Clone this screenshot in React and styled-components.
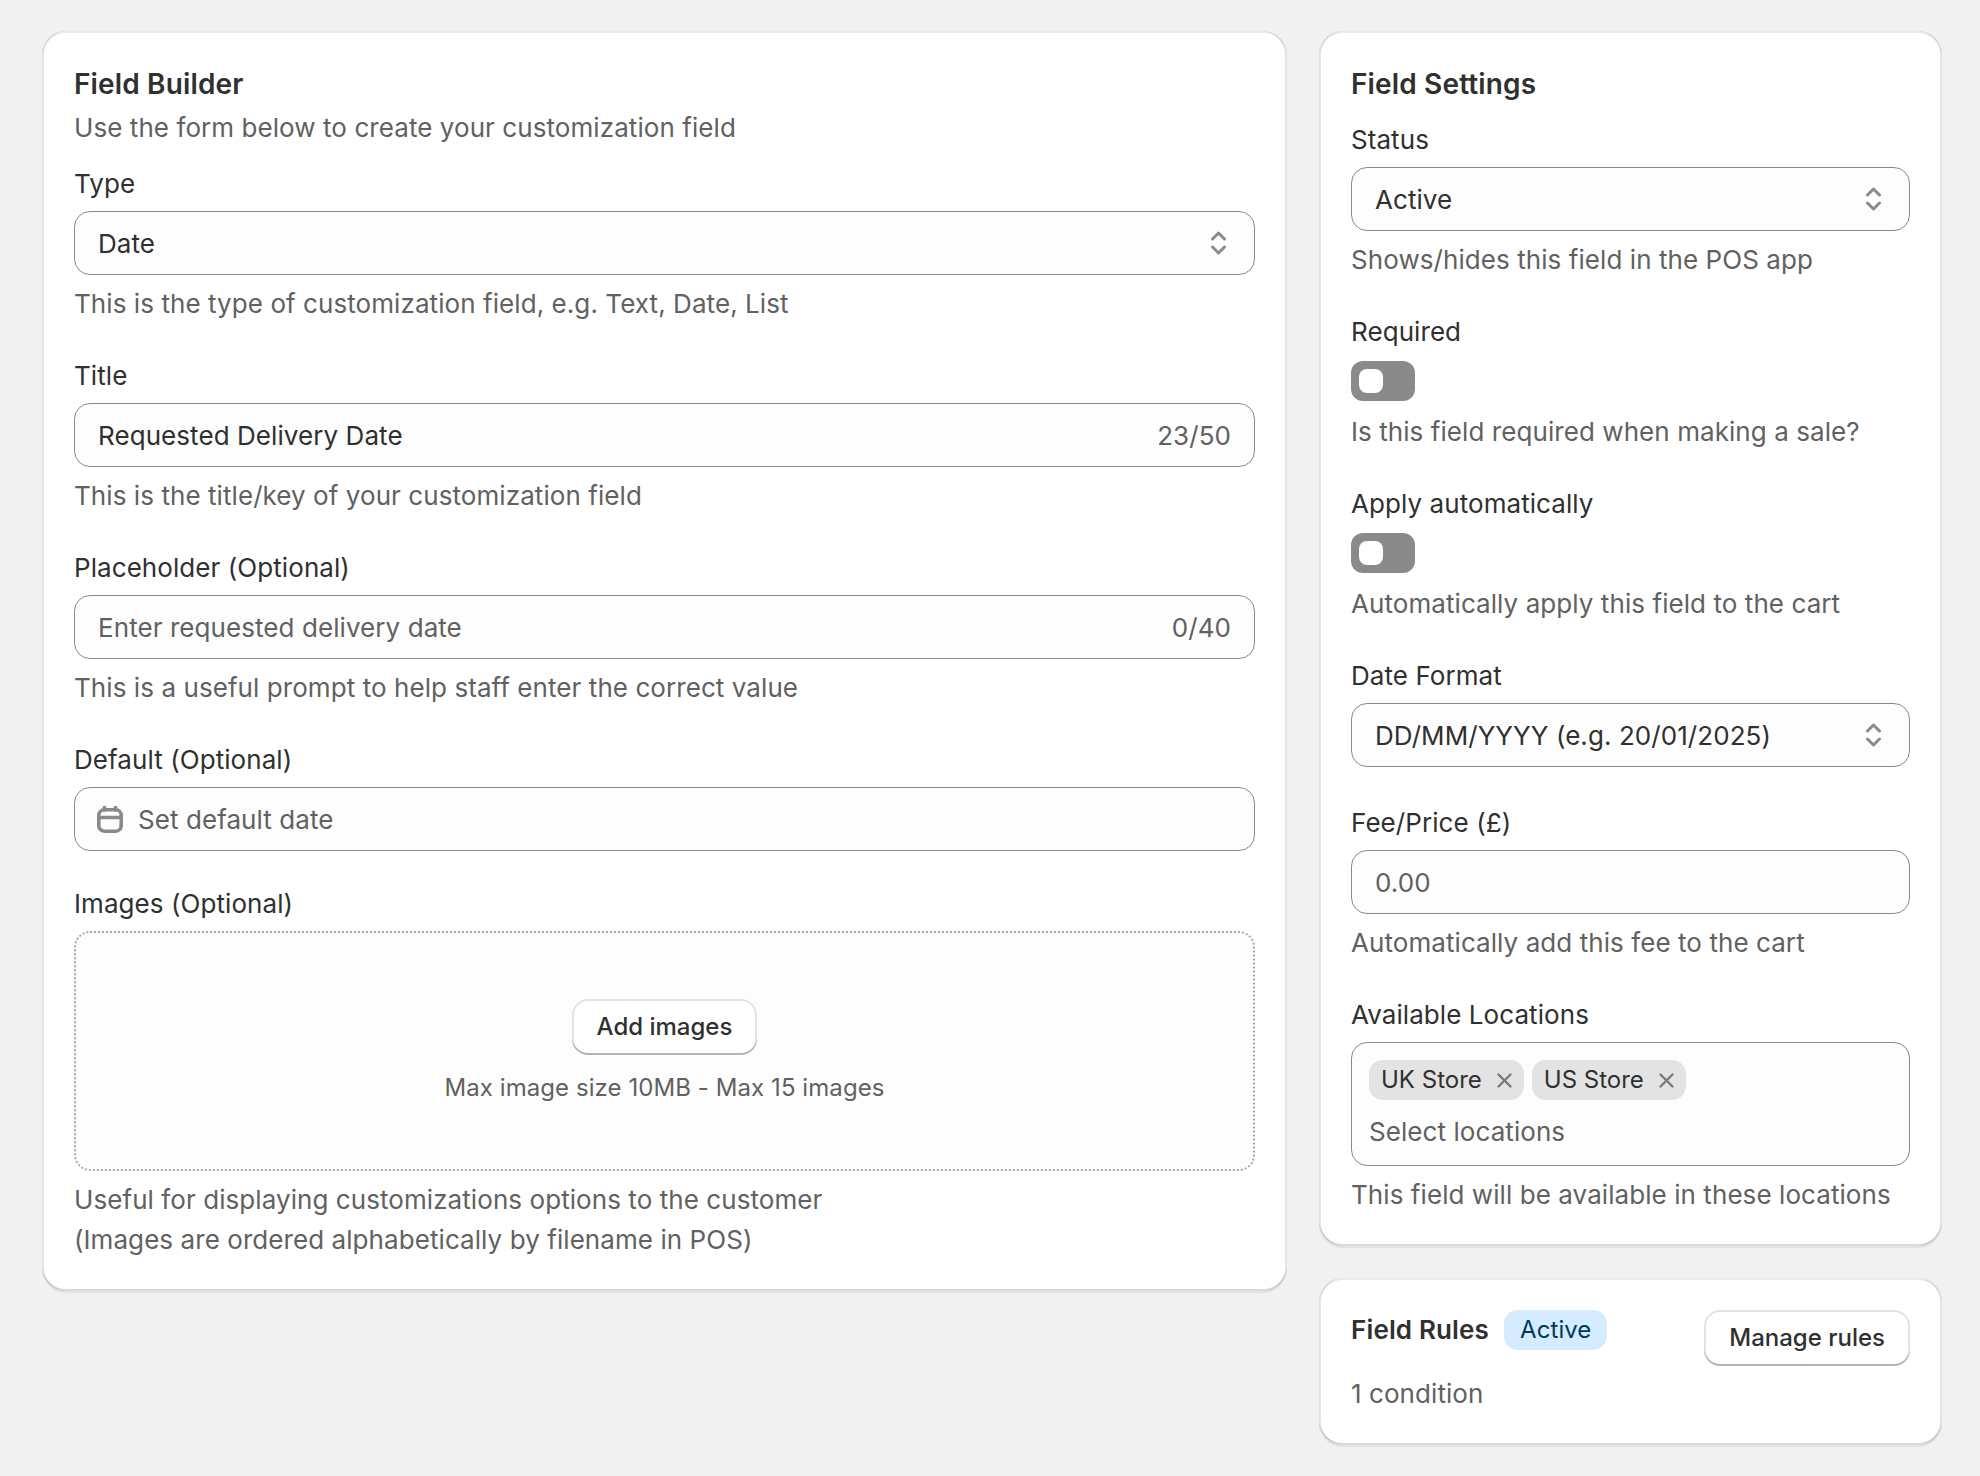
import React from 'react';
import styled, { createGlobalStyle } from 'styled-components';

const GlobalStyle = createGlobalStyle`
  html, body {
    margin: 0;
    padding: 0;
    background: #f1f1f1;
  }
  body {
    font-family: "Inter", "Liberation Sans", sans-serif;
    font-size: 26px;
    line-height: 40px;
    font-weight: 400;
    letter-spacing: 0.07px;
    color: #303030;
    -webkit-font-smoothing: antialiased;
  }
`;

const SelectArrows = () => (
  <ArrowSvg viewBox="0 0 15 24">
    <polyline points="1.5,8 7.5,2 13.5,8" />
    <polyline points="1.5,16 7.5,22 13.5,16" />
  </ArrowSvg>
);

const CalendarIcon = () => (
  <CalendarSvg viewBox="0 0 26 27">
    <rect x="1.8" y="3.8" width="22.4" height="21.4" rx="5.5" />
    <line x1="2" y1="11.5" x2="24" y2="11.5" />
    <line x1="7.5" y1="1.5" x2="7.5" y2="4" />
    <line x1="18.5" y1="1.5" x2="18.5" y2="4" />
  </CalendarSvg>
);

const SelectField = ({ value }) => (
  <FieldBox>
    <FieldValue>{value}</FieldValue>
    <SelectArrows />
  </FieldBox>
);

const Toggle = () => (
  <ToggleTrack>
    <ToggleKnob />
  </ToggleTrack>
);

const LocationTag = ({ name }) => (
  <Tag>
    {name}
    <TagClose viewBox="0 0 15 15">
      <line x1="1.5" y1="1.5" x2="13.5" y2="13.5" />
      <line x1="13.5" y1="1.5" x2="1.5" y2="13.5" />
    </TagClose>
  </Tag>
);

export default function App() {
  return (
    <>
      <GlobalStyle />
      <Page>
        <BuilderColumn>
          <Card>
            <Heading>Field Builder</Heading>
            <Intro>Use the form below to create your customization field</Intro>

            <Group>
              <Label>Type</Label>
              <SelectField value="Date" />
              <Help>This is the type of customization field, e.g. Text, Date, List</Help>
            </Group>

            <Group>
              <Label>Title</Label>
              <FieldBox>
                <FieldValue>Requested Delivery Date</FieldValue>
                <Counter>23/50</Counter>
              </FieldBox>
              <Help>This is the title/key of your customization field</Help>
            </Group>

            <Group>
              <Label>Placeholder (Optional)</Label>
              <FieldBox>
                <FieldValue $muted>Enter requested delivery date</FieldValue>
                <Counter>0/40</Counter>
              </FieldBox>
              <Help>This is a useful prompt to help staff enter the correct value</Help>
            </Group>

            <Group>
              <Label>Default (Optional)</Label>
              <FieldBox $iconLeft>
                <CalendarIcon />
                <FieldValue $muted>Set default date</FieldValue>
              </FieldBox>
            </Group>

            <Group>
              <Label>Images (Optional)</Label>
              <DropZone>
                <Button>Add images</Button>
                <DropHint>Max image size 10MB - Max 15 images</DropHint>
              </DropZone>
              <Help>
                Useful for displaying customizations options to the customer
                <br />
                (Images are ordered alphabetically by filename in POS)
              </Help>
            </Group>
          </Card>
        </BuilderColumn>

        <SideColumn>
          <Card>
            <Heading>Field Settings</Heading>
            <Group>
              <Label>Status</Label>
              <SelectField value="Active" />
              <Help>Shows/hides this field in the POS app</Help>
            </Group>

            <Group>
              <Label>Required</Label>
              <Toggle />
              <Help>Is this field required when making a sale?</Help>
            </Group>

            <Group>
              <Label>Apply automatically</Label>
              <Toggle />
              <Help>Automatically apply this field to the cart</Help>
            </Group>

            <Group>
              <Label>Date Format</Label>
              <SelectField value="DD/MM/YYYY (e.g. 20/01/2025)" />
            </Group>

            <Group $wide>
              <Label>Fee/Price (£)</Label>
              <FieldBox>
                <FieldValue $muted>0.00</FieldValue>
              </FieldBox>
              <Help>Automatically add this fee to the cart</Help>
            </Group>

            <Group>
              <Label>Available Locations</Label>
              <TagBox>
                <TagRow>
                  <LocationTag name="UK Store" />
                  <LocationTag name="US Store" />
                </TagRow>
                <TagPlaceholder>Select locations</TagPlaceholder>
              </TagBox>
              <Help>This field will be available in these locations</Help>
            </Group>
          </Card>

          <Card $compact>
            <RulesHeader>
              <RulesTitle>
                <RulesHeading>Field Rules</RulesHeading>
                <Badge>Active</Badge>
              </RulesTitle>
              <Button>Manage rules</Button>
            </RulesHeader>
            <Help>1 condition</Help>
          </Card>
        </SideColumn>
      </Page>
    </>
  );
}

const Page = styled.div`
  display: flex;
  align-items: flex-start;
  gap: 32px;
  padding: 31px 38px 31px 42px;
  box-sizing: border-box;
  min-height: 100vh;
`;

const BuilderColumn = styled.div`
  flex: 0 0 1245px;
  min-width: 0;
`;

const SideColumn = styled.div`
  flex: 0 0 623px;
  display: flex;
  flex-direction: column;
  gap: 32px;
`;

const Card = styled.section`
  background: #fff;
  border-radius: 24px;
  padding: ${(p) => (p.$compact ? '32px' : '33px')} 32px 31px;
  box-sizing: border-box;
  box-shadow:
    0 2px 0 0 rgba(26, 26, 26, 0.07),
    inset 2px 0 0 0 rgba(0, 0, 0, 0.1),
    inset -2px 0 0 0 rgba(0, 0, 0, 0.1),
    inset 0 -2px 0 0 rgba(0, 0, 0, 0.14),
    inset 0 2px 0 0 rgba(204, 204, 204, 0.4);
`;

const Heading = styled.h2`
  margin: 0;
  font-size: 28px;
  line-height: 40px;
  font-weight: 600;
  letter-spacing: 0.15px;
  color: #303030;
`;

const RulesHeading = styled(Heading)`
  font-size: 26px;
`;

const Intro = styled.p`
  margin: 4px 0 0;
  color: #616161;
`;

const Group = styled.div`
  display: flex;
  flex-direction: column;
  margin-top: ${(p) => (p.$wide ? '35px' : '32px')};

  ${Intro} + &, ${Heading} + & {
    margin-top: 16px;
  }
`;

const Label = styled.div`
  margin-bottom: 7px;
  color: #303030;
`;

const Help = styled.div`
  margin-top: 8px;
  color: #616161;
`;

const FieldBox = styled.div`
  display: flex;
  align-items: center;
  gap: ${(p) => (p.$iconLeft ? '15px' : '24px')};
  height: 64px;
  flex: none;
  margin-bottom: 1px;
  padding: 2px 23px 0 ${(p) => (p.$iconLeft ? '22px' : '23px')};
  box-sizing: border-box;
  background: #fdfdfd;
  border: 1.3px solid #8a8a8a;
  border-radius: 16px;
`;

const FieldValue = styled.span`
  flex: 1;
  color: ${(p) => (p.$muted ? '#616161' : '#303030')};
`;

const Counter = styled.span`
  color: #616161;
`;

const ArrowSvg = styled.svg`
  flex: none;
  width: 15px;
  height: 24px;
  margin: -2px 5px 0 0;
  fill: none;
  stroke: #8a8a8a;
  stroke-width: 3;
  stroke-linecap: round;
  stroke-linejoin: round;
`;

const CalendarSvg = styled.svg`
  flex: none;
  width: 26px;
  height: 27px;
  margin-top: -2px;
  fill: none;
  stroke: #8a8a8a;
  stroke-width: 3.6;
  stroke-linecap: round;
`;

const ToggleTrack = styled.div`
  display: flex;
  align-items: center;
  flex: none;
  width: 64px;
  height: 40px;
  margin: 2px 0 3px;
  padding-left: 8px;
  box-sizing: border-box;
  background: #8a8a8a;
  border-radius: 12px;
`;

const ToggleKnob = styled.div`
  width: 24px;
  height: 24px;
  background: #fff;
  border-radius: 8px;
`;

const DropZone = styled.div`
  display: flex;
  flex-direction: column;
  align-items: center;
  justify-content: center;
  flex: none;
  gap: 13px;
  height: 240px;
  margin-bottom: 1px;
  padding-top: 4px;
  box-sizing: border-box;
  background: #fdfdfd;
  border: 2px dotted #a8a8a8;
  border-radius: 16px;
`;

const DropHint = styled.div`
  font-size: 24px;
  color: #616161;
`;

const Button = styled.button`
  height: 56px;
  padding: 0 25px;
  box-sizing: border-box;
  flex: none;
  font: inherit;
  font-size: 24px;
  font-weight: 500;
  color: #303030;
  background: #fff;
  border: none;
  border-radius: 16px;
  box-shadow:
    inset 0 -2px 0 0 #b5b5b5,
    inset 0 0 0 2px #e3e3e3,
    inset 0 2px 0 0 #fff;
`;

const TagBox = styled.div`
  flex: none;
  height: 124px;
  margin-bottom: 1px;
  padding: 17px 17px 14px;
  box-sizing: border-box;
  background: #fdfdfd;
  border: 1.3px solid #8a8a8a;
  border-radius: 16px;
`;

const TagRow = styled.div`
  display: flex;
  gap: 8px;
`;

const Tag = styled.span`
  display: inline-flex;
  align-items: center;
  gap: 15px;
  height: 40px;
  padding: 0 12px;
  background: #e3e3e3;
  border-radius: 14px;
  font-size: 24px;
  letter-spacing: 0;
  color: #303030;
`;

const TagClose = styled.svg`
  width: 15px;
  height: 15px;
  fill: none;
  stroke: #7a7a7a;
  stroke-width: 2.4;
  stroke-linecap: round;
`;

const TagPlaceholder = styled.div`
  margin-top: 12px;
  color: #616161;
`;

const RulesHeader = styled.div`
  display: flex;
  justify-content: space-between;
  align-items: flex-start;
`;

const RulesTitle = styled.div`
  display: flex;
  align-items: center;
  gap: 15px;
`;

const Badge = styled.span`
  height: 40px;
  padding: 0 16px;
  background: #d5ebff;
  border-radius: 14px;
  font-size: 24px;
  color: #003a5a;
`;
